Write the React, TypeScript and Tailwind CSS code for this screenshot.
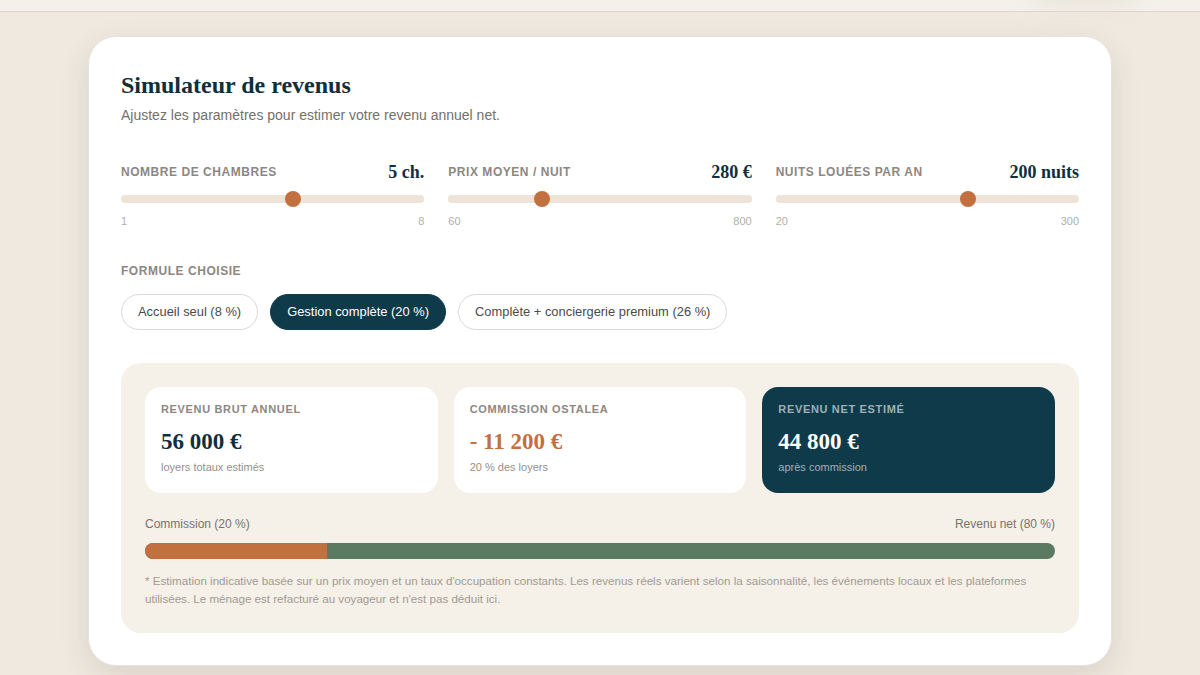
import React from "react";

const sans = { fontFamily: '"Liberation Sans", Arial, sans-serif' };
const serif = { fontFamily: '"Liberation Serif", "Times New Roman", serif' };

function Slider({ label, value, min, max, v }: { label: string; value: string; min: number; max: number; v: number }) {
  const p = (v - min) / (max - min);
  return (
    <div className="flex flex-col">
      <div className="flex items-center justify-between h-6">
        <span className="text-[12px] font-bold uppercase tracking-[0.045em] text-[#8c8782]">{label}</span>
        <span className="text-[18px] font-bold text-[#0f2f3d]" style={serif}>{value}</span>
      </div>
      <div className="relative mt-[11px] h-2 rounded-full bg-[#ede3d6]">
        <div
          className="absolute top-1/2 h-4 w-4 -translate-x-1/2 -translate-y-1/2 rounded-full bg-[#c2703f]"
          style={{ left: `calc(8px + ${p} * (100% - 16px))` }}
        />
      </div>
      <div className="mt-[10px] flex justify-between text-[11px] leading-4 text-[#b3ada6]">
        <span>{min}</span>
        <span>{max}</span>
      </div>
    </div>
  );
}

function Stat({ label, value, sub, dark, orange }: { label: string; value: string; sub: string; dark?: boolean; orange?: boolean }) {
  return (
    <div className={`rounded-2xl px-4 pt-4 pb-[19px] ${dark ? "bg-[#0f3a4a]" : "bg-white"}`}>
      <div className={`text-[11px] leading-[12px] font-bold uppercase tracking-[0.06em] ${dark ? "text-[#9fb0b5]" : "text-[#8c8782]"}`}>{label}</div>
      <div
        className={`mt-[13px] text-[23px] leading-7 font-bold ${dark ? "text-white" : orange ? "text-[#c2703f]" : "text-[#0f2f3d]"}`}
        style={serif}
      >
        {value}
      </div>
      <div className={`mt-1 text-[11px] leading-[14px] ${dark ? "text-[#9fb0b5]" : "text-[#948f89]"}`}>{sub}</div>
    </div>
  );
}

export default function App() {
  return (
    <div className="relative min-h-[675px] overflow-hidden bg-[#f0e9df]" style={sans}>
      <div className="h-3 border-b border-[#d8d5ce] bg-[#f5f1ea]" />
      <div className="pointer-events-none absolute -top-6 right-[60px] h-8 w-[110px] rounded-full bg-[#e6e0d6] blur-md opacity-70" />
      <div className="mx-auto mt-[24px] w-[1024px] rounded-[28px] border border-[#e6e3de] bg-white px-8 pt-8 pb-8 shadow-[0_10px_30px_rgba(60,50,30,0.12)]">
        <h1 className="text-[24px] leading-8 font-bold text-[#0f2f3d]" style={serif}>Simulateur de revenus</h1>
        <p className="mt-1 text-[14px] leading-5 text-[#737069]">Ajustez les paramètres pour estimer votre revenu annuel net.</p>

        <div className="mt-[35px] grid grid-cols-3 gap-6">
          <Slider label="Nombre de chambres" value="5 ch." min={1} max={8} v={5} />
          <Slider label="Prix moyen / nuit" value="280 €" min={60} max={800} v={280} />
          <Slider label="Nuits louées par an" value="200 nuits" min={20} max={300} v={200} />
        </div>

        <div className="mt-[34px] text-[12px] leading-4 font-bold uppercase tracking-[0.045em] text-[#8c8782]">Formule choisie</div>
        <div className="mt-[15px] flex gap-3">
          <button className="h-9 rounded-full border border-[#dcd9d4] bg-white px-4 text-[12.9px] text-[#4a4a4a]">Accueil seul (8 %)</button>
          <button className="h-9 rounded-full border border-[#0f3a4a] bg-[#0f3a4a] px-4 text-[12.9px] text-white">Gestion complète (20 %)</button>
          <button className="h-9 rounded-full border border-[#dcd9d4] bg-white px-4 text-[12.9px] text-[#4a4a4a]">Complète + conciergerie premium (26 %)</button>
        </div>

        <div className="mt-[33px] rounded-[20px] bg-[#f5f0e8] p-6 pb-[25px]">
          <div className="grid grid-cols-3 gap-4">
            <Stat label="Revenu brut annuel" value="56 000 €" sub="loyers totaux estimés" />
            <Stat label="Commission Ostalea" value="- 11 200 €" sub="20 % des loyers" orange />
            <Stat label="Revenu net estimé" value="44 800 €" sub="après commission" dark />
          </div>
          <div className="mt-[23px] flex justify-between text-[12px] leading-4 text-[#78736d]">
            <span>Commission (20 %)</span>
            <span>Revenu net (80 %)</span>
          </div>
          <div className="mt-[11px] flex h-4 overflow-hidden rounded-full bg-[#5b7a62]">
            <div className="h-full bg-[#c2703f]" style={{ width: "20%" }} />
          </div>
          <p className="mt-[13px] text-[11.6px] leading-[18px] text-[#a19b94]">
            * Estimation indicative basée sur un prix moyen et un taux d'occupation constants. Les revenus réels varient selon la saisonnalité, les événements locaux et les plateformes utilisées. Le ménage est refacturé au voyageur et n'est pas déduit ici.
          </p>
        </div>
      </div>
    </div>
  );
}
